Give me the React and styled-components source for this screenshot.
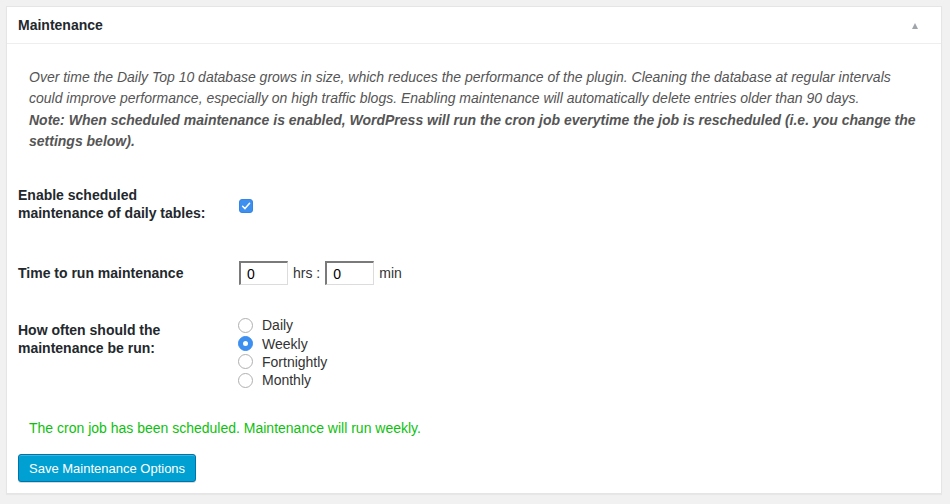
import React, { useState } from "react";
import styled, { createGlobalStyle } from "styled-components";

const GlobalStyle = createGlobalStyle`
  body {
    margin: 0;
    background: #f1f1f1;
    font-family: "Liberation Sans", Arial, sans-serif;
    color: #23282d;
  }
`;

const options = ["Daily", "Weekly", "Fortnightly", "Monthly"];

function App() {
    const [enabled, setEnabled] = useState(true);
    const [hours, setHours] = useState("0");
    const [minutes, setMinutes] = useState("0");
    const [freq, setFreq] = useState("Weekly");

    return (
        <>
            <GlobalStyle />
            <Panel>
                <Header>
                    <Title>Maintenance</Title>
                    <Toggle />
                </Header>
                <Inside>
                    <Intro>
                        Over time the Daily Top 10 database grows in size, which reduces the performance of the plugin. Cleaning the database at regular intervals could improve performance, especially on high traffic blogs. Enabling maintenance will automatically delete entries older than 90 days.
                        <br />
                        <strong>Note: When scheduled maintenance is enabled, WordPress will run the cron job everytime the job is rescheduled (i.e. you change the settings below).</strong>
                    </Intro>

                    <Row $align="center" $top={34}>
                        <Label>Enable scheduled<br />maintenance of daily tables:</Label>
                        <Field>
                            <Check $checked={enabled} onClick={() => setEnabled(!enabled)}>
                                {enabled && (
                                    <svg width="10" height="10" viewBox="0 0 10 10">
                                        <path d="M1.6 5.2 L4 7.6 L8.6 2.2" fill="none" stroke="#fff" strokeWidth="1.5" strokeLinecap="round" strokeLinejoin="round" />
                                    </svg>
                                )}
                            </Check>
                        </Field>
                    </Row>

                    <Row $align="center" $top={39}>
                        <Label>Time to run maintenance</Label>
                        <Field>
                            <TimeInput value={hours} onChange={e => setHours(e.target.value)} />
                            <Unit>hrs :</Unit>
                            <TimeInput value={minutes} onChange={e => setMinutes(e.target.value)} />
                            <Unit>min</Unit>
                        </Field>
                    </Row>

                    <Row $align="start" $top={31}>
                        <Label $offset={5}>How often should the<br />maintenance be run:</Label>
                        <RadioList>
                            {options.map(o => (
                                <RadioItem key={o} onClick={() => setFreq(o)}>
                                    <Radio $checked={freq === o} />
                                    {o}
                                </RadioItem>
                            ))}
                        </RadioList>
                    </Row>

                    <Notice>The cron job has been scheduled. Maintenance will run weekly.</Notice>
                    <Button type="button">Save Maintenance Options</Button>
                </Inside>
            </Panel>
        </>
    );
}

const Panel = styled.div`
  margin: 6px 8px 9px 6px;
  background: #fff;
  border: 1px solid #e5e5e5;
  box-shadow: 0 1px 1px rgba(0, 0, 0, 0.04);
`;

const Header = styled.div`
  display: flex;
  align-items: center;
  justify-content: space-between;
  height: 35px;
  padding: 0 23px 1px 11px;
  border-bottom: 1px solid #eee;
`;

const Title = styled.h2`
  margin: 0;
  font-size: 14px;
  font-weight: bold;
  color: #23282d;
`;

const Toggle = styled.span`
  width: 0;
  height: 0;
  border-left: 3.5px solid transparent;
  border-right: 3.5px solid transparent;
  border-bottom: 6px solid #a0a5aa;
  margin-top: 2px;
`;

const Inside = styled.div`
  padding: 0 11px 11px 11px;
`;

const Intro = styled.p`
  margin: 23px 0 0 0;
  padding: 0 10px 0 11px;
  font-size: 14px;
  line-height: 21.3px;
  font-style: italic;
  color: #555;
  strong {
    font-weight: bold;
  }
`;

const Row = styled.div`
  display: grid;
  grid-template-columns: 221px 1fr;
  align-items: ${props => props.$align};
  margin-top: ${props => props.$top}px;
`;

const Label = styled.div`
  font-size: 14px;
  font-weight: bold;
  line-height: 18px;
  padding-top: ${props => props.$offset || 0}px;
`;

const Field = styled.div`
  display: flex;
  align-items: center;
  font-size: 14px;
  color: #333;
`;

const Check = styled.span`
  display: inline-flex;
  align-items: center;
  justify-content: center;
  width: 14px;
  height: 14px;
  margin-top: 4px;
  border-radius: 3px;
  box-sizing: border-box;
  background: ${props => props.$checked ? "#3d8ff0" : "#fff"};
  border: 1px solid ${props => props.$checked ? "#3585e6" : "#b4b4b4"};
  cursor: pointer;
`;

const TimeInput = styled.input`
  width: 49px;
  height: 24px;
  box-sizing: border-box;
  padding: 0 6px;
  font-family: "Liberation Sans", Arial, sans-serif;
  font-size: 14px;
  color: #000;
  border-style: solid;
  border-width: 2px 1px 1px 2px;
  border-color: #7a7a7a #dcdcdc #dcdcdc #7a7a7a;
  outline: none;
`;

const Unit = styled.span`
  margin: 0 5px;
  color: #333;
`;

const RadioList = styled.div`
  display: flex;
  flex-direction: column;
  margin-left: -1px;
`;

const RadioItem = styled.label`
  display: flex;
  align-items: center;
  gap: 9px;
  height: 18.3px;
  font-size: 14px;
  color: #333;
  cursor: pointer;
`;

const Radio = styled.span`
  width: 15px;
  height: 15px;
  box-sizing: border-box;
  border-radius: 50%;
  border: 1px solid ${props => props.$checked ? "#3a8df0" : "#b0b0b0"};
  background: ${props => props.$checked ? "#3d8ff0" : "#fff"};
  display: flex;
  align-items: center;
  justify-content: center;
  &::after {
    content: "";
    width: 5px;
    height: 5px;
    border-radius: 50%;
    background: #fff;
    display: ${props => props.$checked ? "block" : "none"};
  }
`;

const Notice = styled.p`
  margin: 30px 0 0 0;
  padding-left: 11px;
  font-size: 14px;
  line-height: 18px;
  color: #0ebf0e;
`;

const Button = styled.button`
  margin-top: 17px;
  height: 28px;
  padding: 0 10px;
  background: #00a0d2;
  border: 1px solid #0073aa;
  border-radius: 3px;
  box-shadow: inset 0 1px 0 rgba(120, 200, 230, 0.5), 0 1px 0 rgba(0, 0, 0, 0.15);
  color: #fff;
  font-family: "Liberation Sans", Arial, sans-serif;
  font-size: 13px;
  cursor: pointer;
`;

export default App;
